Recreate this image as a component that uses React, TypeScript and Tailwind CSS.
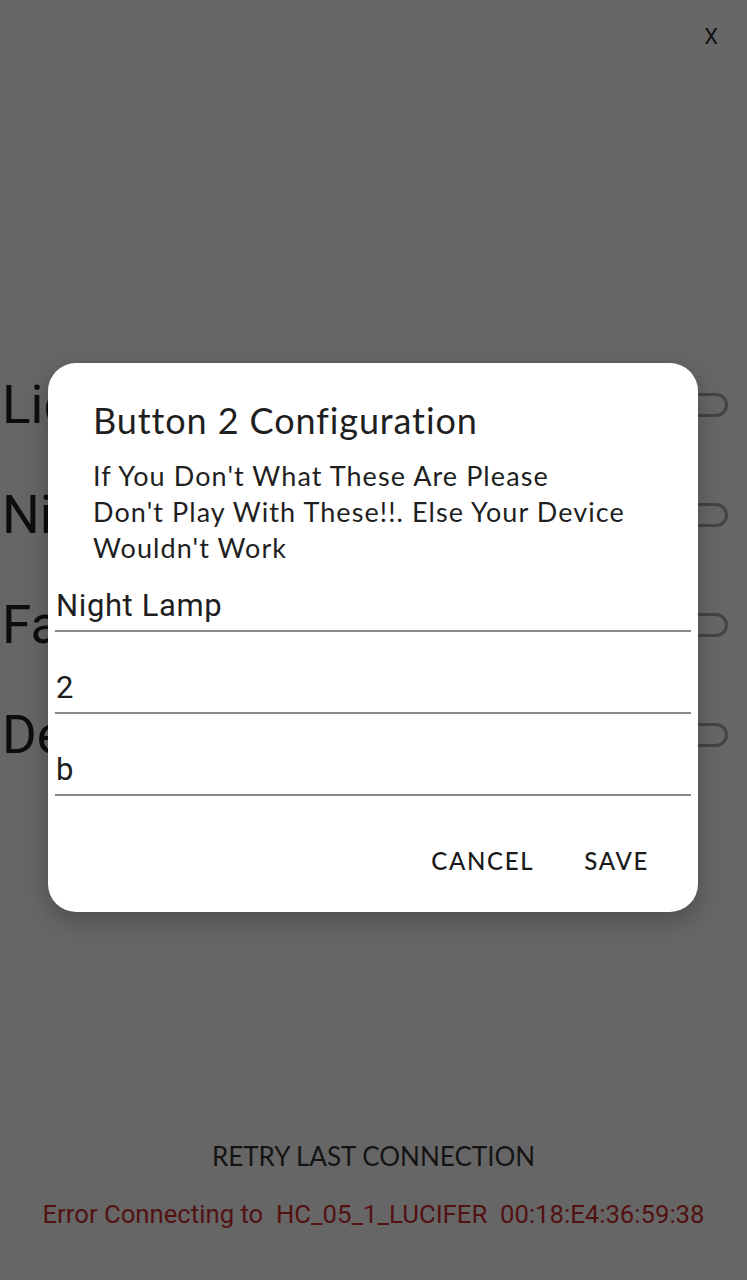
const rows = ["Light", "Night", "Fan", "Device"];

const fields = [
    { value: "Night Lamp", h: "h-[66px]" },
    { value: "2", h: "h-[82px]" },
    { value: "b", h: "h-[82px]" },
];

const Toggle = () => (
    <div className="w-[46px] h-[24px] rounded-full border-[3px] border-[#444]" />
);

const ConfigDialog = () => {
    return (
        <div className="absolute left-[48px] top-[363px] w-[650px] h-[549px] bg-white rounded-[28px] shadow-[0_8px_24px_rgba(0,0,0,0.25)] flex flex-col">
            <h2 className="pl-[45px] pt-[35px] text-[36px] leading-[44px] tracking-[0.025em] text-[#1f1f1f] font-['Lato',sans-serif]">
                Button 2 Configuration
            </h2>
            <p className="pl-[45px] mt-[16px] text-[27px] leading-[36px] tracking-[0.04em] text-[#1f1f1f] font-['Lato',sans-serif]">
                If You Don't What These Are Please
                <br />
                Don't Play With These!!. Else Your Device
                <br />
                Wouldn't Work
            </p>
            <div className="px-[7px]">
                {fields.map((f) => (
                    <div
                        key={f.value}
                        className={`${f.h} flex items-end pb-[6px] border-b-2 border-[#8a8a8a]`}
                    >
                        <span className="pl-[1px] text-[31px] leading-[36px] tracking-[0.02em] text-[#1f1f1f] font-['Roboto',sans-serif]">
                            {f.value}
                        </span>
                    </div>
                ))}
            </div>
            <div className="flex justify-end gap-[50px] pr-[49px] mt-[47px]">
                <button className="text-[24px] leading-[36px] tracking-[0.07em] font-medium text-[#1a1a1a] font-['Lato',sans-serif]">
                    CANCEL
                </button>
                <button className="text-[24px] leading-[36px] tracking-[0.07em] font-medium text-[#1a1a1a] font-['Lato',sans-serif]">
                    SAVE
                </button>
            </div>
        </div>
    );
};

export default function App() {
    return (
        <div className="relative w-[747px] h-[1280px] bg-[#666666] overflow-hidden flex flex-col font-['Roboto',sans-serif]">
            <div className="flex justify-end pr-[29px] pt-[22px] h-[350px]">
                <span className="text-[22px] leading-[30px] text-[#141414]">X</span>
            </div>

            <div className="flex flex-col">
                {rows.map((r) => (
                    <div key={r} className="h-[110px] flex items-center justify-between pr-[19px]">
                        <span className="pl-[2px] text-[53px] leading-[60px] text-[#0d0d0d]">
                            {r}
                        </span>
                        <Toggle />
                    </div>
                ))}
            </div>

            <div className="mt-auto flex flex-col items-center pb-[48px]">
                <span className="h-[40px] leading-[40px] text-[26px] text-[#141414] font-['Lato',sans-serif]">
                    RETRY LAST CONNECTION
                </span>
                <span className="mt-[20px] h-[36px] leading-[36px] text-[25.7px] text-[#521212] whitespace-pre">
                    {"Error Connecting to  HC_05_1_LUCIFER  00:18:E4:36:59:38"}
                </span>
            </div>

            <ConfigDialog />
        </div>
    );
}
